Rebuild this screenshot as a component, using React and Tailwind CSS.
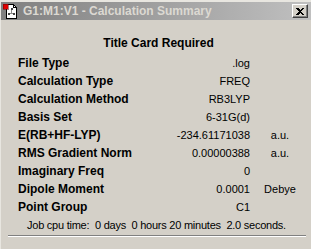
import React from 'react';

const rows = [
  { label: 'File Type', value: '.log', unit: '' },
  { label: 'Calculation Type', value: 'FREQ', unit: '' },
  { label: 'Calculation Method', value: 'RB3LYP', unit: '' },
  { label: 'Basis Set', value: '6-31G(d)', unit: '' },
  { label: 'E(RB+HF-LYP)', value: '-234.61171038', unit: 'a.u.' },
  { label: 'RMS Gradient Norm', value: '0.00000388', unit: 'a.u.' },
  { label: 'Imaginary Freq', value: '0', unit: '' },
  { label: 'Dipole Moment', value: '0.0001', unit: 'Debye' },
  { label: 'Point Group', value: 'C1', unit: '' },
];

function FileIcon() {
  return (
    <svg width="16" height="16" viewBox="0 0 16 16" shapeRendering="crispEdges">
      <path d="M3 1h7l3 3v11H3z" fill="#fff" stroke="#000" strokeWidth="1" />
      <path d="M10 1v3h3" fill="none" stroke="#000" strokeWidth="1" />
      <rect x="0" y="1" width="5" height="5" fill="#e00000" stroke="#600" strokeWidth="0.5" />
      <rect x="7.5" y="5" width="2" height="2" fill="#444" />
      <rect x="8" y="7" width="1" height="3" fill="#888" />
      <rect x="5" y="10" width="2" height="2" fill="#444" />
      <rect x="10" y="10" width="2" height="2" fill="#444" />
      <rect x="7" y="10" width="3" height="1" fill="#888" />
    </svg>
  );
}

function CloseButton() {
  return (
    <div className="w-[16px] h-[14px] bg-[#d4d0c8] border-t border-l border-t-white border-l-white border-r border-b border-r-[#404040] border-b-[#404040] shadow-[inset_-1px_-1px_0_#808080] flex items-center justify-center">
      <svg width="8" height="7" viewBox="0 0 8 7" shapeRendering="crispEdges">
        <path d="M0 0h2l2 2 2-2h2v1L5 3.5 8 6v1H6L4 5 2 7H0V6l3-2.5L0 1z" fill="#000" />
      </svg>
    </div>
  );
}

export default function App() {
  return (
    <div className="w-[311px] h-[249px] bg-[#d4d0c8] overflow-hidden border-t-2 border-l border-t-[#e8e6e0] border-l-[#e8e6e0] font-['Liberation_Sans',Arial,sans-serif] text-black">
      {/* Title bar */}
      <div className="h-[18px] flex items-center bg-gradient-to-r from-[#808080] to-[#c0c0c0] pl-[2px] pr-[3px]">
        <FileIcon />
        <div className="ml-[4px] flex-1 text-[12px] font-bold text-[#dcd9d2] leading-none">
          G1:M1:V1 - Calculation Summary
        </div>
        <CloseButton />
      </div>

      <div className="pt-[14px]">
        <div className="text-center pl-[5px] font-bold text-[12px] leading-[18px]">Title Card Required</div>

        <div className="mt-[2px] pl-[17px]">
          {rows.map((r) => (
            <div key={r.label} className="flex h-[18px] items-center">
              <div className="w-[150px] font-bold text-[12px]">{r.label}</div>
              <div className="w-[82px] text-right text-[11px]">{r.value}</div>
              <div className="w-[44px] ml-[8px] text-center text-[11px]">{r.unit}</div>
            </div>
          ))}
        </div>

        <div className="h-[18px] pl-[26px] text-[11px] leading-[18px] tracking-[-0.24px] whitespace-pre">
          {'Job cpu time:  0 days  0 hours 20 minutes  2.0 seconds.'}
        </div>

        <div className="mt-[1px] ml-[7px] mr-[5px] border-t border-t-[#808080] border-b border-b-white" />
      </div>
    </div>
  );
}
